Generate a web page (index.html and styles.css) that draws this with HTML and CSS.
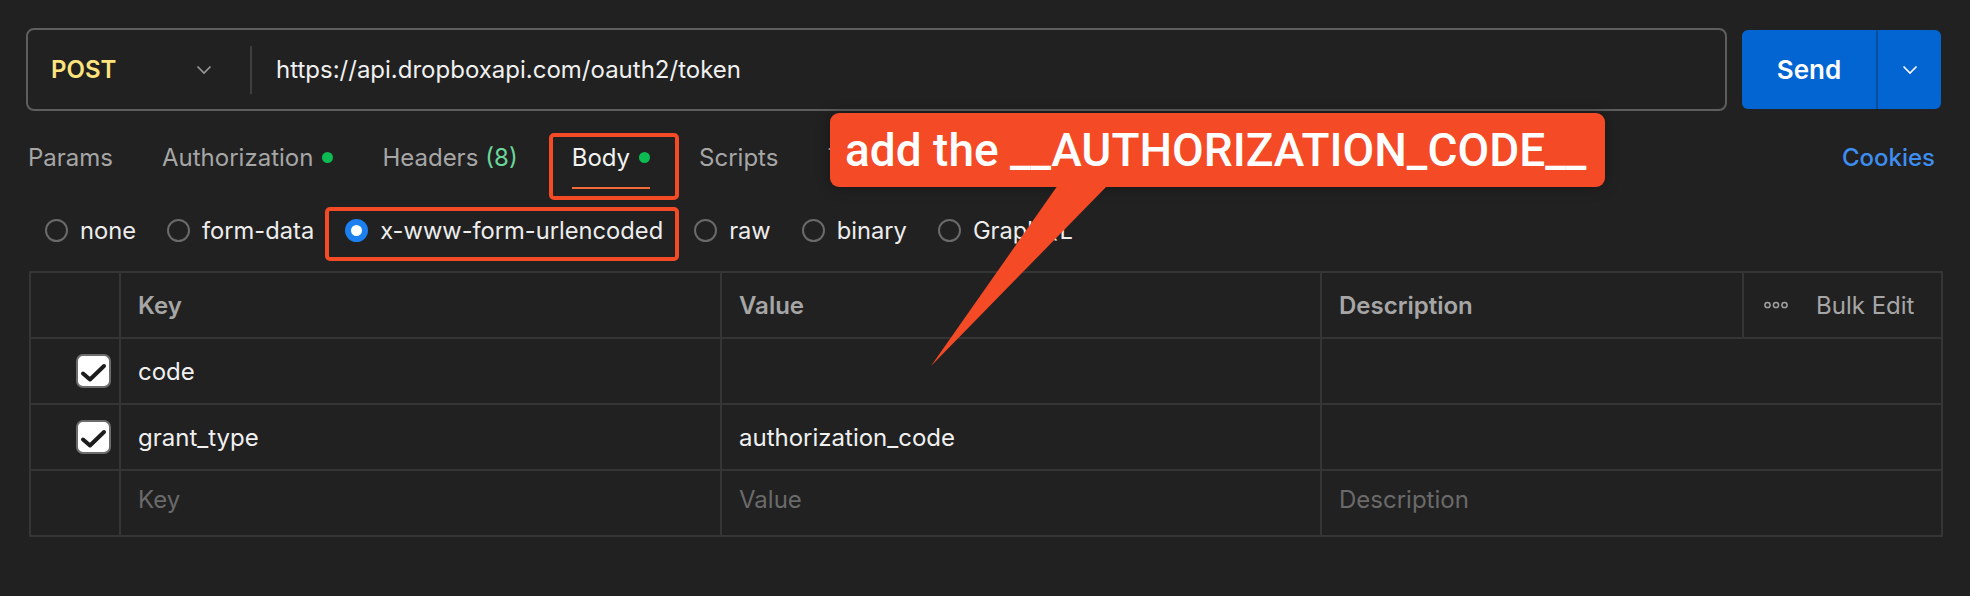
FILE: index.html
```html
<!DOCTYPE html>
<html lang="en">
<head>
<meta charset="utf-8">
<title>POST token</title>
<link rel="stylesheet" href="styles.css">
</head>
<body>
<div class="page">
  <div class="url-row">
    <div class="url-box">
      <div class="method">
        <span class="method-name">POST</span>
        <svg class="chev chev-method" width="16" height="10" viewBox="0 0 16 10"><path d="M1.5 1.5 L8 8 L14.5 1.5" fill="none" stroke="#9a9a9a" stroke-width="1.6"/></svg>
      </div>
      <div class="url-divider"></div>
      <div class="url">https://api.dropboxapi.com/oauth2/token</div>
    </div>
    <div class="send">
      <span class="send-label">Send</span>
      <span class="send-split">
        <svg class="chev" width="16" height="10" viewBox="0 0 16 10"><path d="M1.5 1.5 L8 8 L14.5 1.5" fill="none" stroke="#ffffff" stroke-width="1.6"/></svg>
      </span>
    </div>
  </div>

  <div class="tabs">
    <div class="tab-list">
      <span class="tab">Params</span>
      <span class="tab">Authorization<i class="dot"></i></span>
      <span class="tab tab-headers">Headers<span class="count">(8)</span></span>
      <span class="tab active">Body<i class="dot"></i></span>
      <span class="tab">Scripts</span>
      <span class="tab">Tests</span>
    </div>
    <span class="cookies">Cookies</span>
  </div>

  <div class="body-types">
    <label class="radio"><span class="circle"></span>none</label>
    <label class="radio"><span class="circle"></span>form-data</label>
    <label class="radio selected"><span class="circle"></span>x-www-form-urlencoded</label>
    <label class="radio"><span class="circle"></span>raw</label>
    <label class="radio"><span class="circle"></span>binary</label>
    <label class="radio"><span class="circle"></span>GraphQL</label>
  </div>

  <table class="kv">
    <colgroup>
      <col class="c-check"><col class="c-key"><col class="c-value"><col class="c-desc"><col class="c-bulk">
    </colgroup>
    <thead>
      <tr>
        <th></th>
        <th>Key</th>
        <th>Value</th>
        <th>Description</th>
        <th class="bulk">
          <span class="bulk-inner">
            <svg width="24" height="8" viewBox="0 0 24 8"><circle cx="3.5" cy="4" r="2.6" fill="none" stroke="#a0a0a0" stroke-width="1.5"/><circle cx="12" cy="4" r="2.6" fill="none" stroke="#a0a0a0" stroke-width="1.5"/><circle cx="20.5" cy="4" r="2.6" fill="none" stroke="#a0a0a0" stroke-width="1.5"/></svg>
            <span>Bulk Edit</span>
          </span>
        </th>
      </tr>
    </thead>
    <tbody>
      <tr>
        <td class="check-cell"><span class="checkbox"><svg width="35" height="33" viewBox="0 0 35 33"><path d="M7 18.5 L14 24.5 L28 11" fill="none" stroke="#1c1c1c" stroke-width="4" stroke-linecap="round" stroke-linejoin="round"/></svg></span></td>
        <td>code</td>
        <td></td>
        <td colspan="2"></td>
      </tr>
      <tr>
        <td class="check-cell"><span class="checkbox"><svg width="35" height="33" viewBox="0 0 35 33"><path d="M7 18.5 L14 24.5 L28 11" fill="none" stroke="#1c1c1c" stroke-width="4" stroke-linecap="round" stroke-linejoin="round"/></svg></span></td>
        <td>grant_type</td>
        <td>authorization_code</td>
        <td colspan="2"></td>
      </tr>
      <tr class="placeholder">
        <td></td>
        <td>Key</td>
        <td>Value</td>
        <td colspan="2">Description</td>
      </tr>
    </tbody>
  </table>

  <div class="callout">add the __AUTHORIZATION_CODE__</div>
  <svg class="callout-pointer" width="1970" height="596" viewBox="0 0 1970 596"><polygon points="1058,185 1108,185 931,366" fill="#f44a25"/></svg>
</div>
</body>
</html>
```

FILE: styles.css
```css
html, body {
  margin: 0;
  padding: 0;
  background: #212121;
}

body {
  font-family: "Inter", "Noto Sans", "Liberation Sans", sans-serif;
  color: #ececec;
  width: 1970px;
  height: 596px;
  overflow: hidden;
}

.page {
  position: relative;
  padding: 28px 29px 0 26px;
  height: 100%;
  box-sizing: border-box;
}

/* URL row */
.url-row {
  display: flex;
  align-items: center;
  gap: 15px;
}

.url-box {
  flex: 1;
  height: 83px;
  box-sizing: border-box;
  border: 2px solid #5e5e5e;
  border-radius: 8px;
  display: flex;
  align-items: center;
}

.method {
  width: 222px;
  box-sizing: border-box;
  padding-left: 23px;
  padding-right: 38px;
  display: flex;
  align-items: center;
  justify-content: space-between;
}

.method-name {
  color: #ffe47e;
  font-weight: 600;
  font-size: 24px;
}

.url-divider {
  width: 2px;
  height: 48px;
  background: #3f3f3f;
}

.url {
  padding-left: 24px;
  font-size: 24px;
  color: #f0f0f0;
}

.send {
  width: 199px;
  height: 79px;
  background: #0265d2;
  border-radius: 6px;
  display: flex;
  align-items: stretch;
  color: #fff;
}

.send-label {
  width: 134px;
  display: flex;
  align-items: center;
  justify-content: center;
  font-weight: 600;
  font-size: 26px;
  border-right: 2px solid #0a4f9e;
}

.send-split {
  flex: 1;
  display: flex;
  align-items: center;
  justify-content: center;
}

/* tabs */
.tabs {
  margin-top: 8px;
  height: 76px;
  display: flex;
  align-items: stretch;
  justify-content: space-between;
  padding-left: 2px;
  padding-right: 6px;
}

.tab-list {
  display: flex;
  align-items: stretch;
  gap: 49px;
}

.tab {
  position: relative;
  display: flex;
  align-items: center;
  font-size: 24px;
  color: #a6a6a6;
}

.tab-headers {
  margin-right: 5px;
}

.tab .dot {
  display: inline-block;
  width: 11px;
  height: 11px;
  border-radius: 50%;
  background: #0cbb52;
  margin-left: 9px;
}

.tab .count {
  color: #6bd69b;
  margin-left: 7px;
}

.tab.active {
  color: #f2f2f2;
}

.tab.active::after {
  content: "";
  position: absolute;
  left: 0;
  right: 0;
  bottom: 6px;
  height: 2px;
  background: #f26b3a;
}

.tab.active::before {
  content: "";
  position: absolute;
  left: -23px;
  right: -29px;
  top: 14px;
  bottom: -5px;
  border: 4px solid #f44a25;
  border-radius: 5px;
}

.cookies {
  display: flex;
  align-items: center;
  font-size: 24px;
  font-weight: 500;
  color: #3d8ef0;
}

/* body type radios */
.body-types {
  margin-top: 5px;
  height: 60px;
  display: flex;
  align-items: stretch;
  gap: 31px;
  padding-left: 19px;
}

.radio {
  position: relative;
  display: flex;
  align-items: center;
  gap: 12px;
  font-size: 23.7px;
  color: #ededed;
}

.circle {
  width: 23px;
  height: 23px;
  box-sizing: border-box;
  border: 2px solid #6a6a6a;
  border-radius: 50%;
}

.radio.selected .circle {
  border: 6px solid #1c7ff0;
  background: #ffffff;
}

.radio.selected::before {
  content: "";
  position: absolute;
  left: -20px;
  right: -16px;
  top: 7px;
  bottom: -1px;
  border: 4px solid #f44a25;
  border-radius: 5px;
}

/* table */
.kv {
  margin-top: 11px;
  margin-left: 3px;
  border-collapse: collapse;
  table-layout: fixed;
  width: 1912px;
}

.c-check { width: 90px; }
.c-key { width: 601px; }
.c-value { width: 600px; }
.c-desc { width: 422px; }
.c-bulk { width: 199px; }

.kv th,
.kv td {
  border: 2px solid #353535;
  height: 64px;
  padding: 0 17px;
  text-align: left;
  font-size: 24px;
  white-space: nowrap;
}

.kv th {
  font-weight: 600;
  color: #a6a6a6;
}

.kv td {
  color: #f0f0f0;
}

.kv th.bulk {
  font-weight: 400;
  padding: 0 0 0 20px;
}

.bulk-inner {
  display: flex;
  align-items: center;
  gap: 28px;
}

.kv td.check-cell {
  padding: 0 8px 0 0;
  text-align: right;
}

.checkbox {
  display: inline-flex;
  vertical-align: middle;
  width: 35px;
  height: 34px;
  box-sizing: border-box;
  background: #ffffff;
  border: 2px solid #6c6c6c;
  border-radius: 7px;
  align-items: center;
  justify-content: center;
}

.checkbox svg {
  flex: none;
}

.kv tr.placeholder td {
  color: #6a6a6a;
  height: 56px;
  padding-bottom: 8px;
}

/* annotation callout */
.callout {
  position: absolute;
  left: 830px;
  top: 113px;
  width: 775px;
  height: 74px;
  box-sizing: border-box;
  padding-left: 15px;
  display: flex;
  align-items: center;
  white-space: nowrap;
  background: #f44a25;
  border-radius: 9px;
  color: #ffffff;
  font-family: "Roboto", "Inter", sans-serif;
  font-size: 46px;
  font-weight: 500;
  box-shadow: 0 0 14px rgba(0, 0, 0, 0.35);
}

.callout-pointer {
  position: absolute;
  left: 0;
  top: 0;
  pointer-events: none;
}
```
